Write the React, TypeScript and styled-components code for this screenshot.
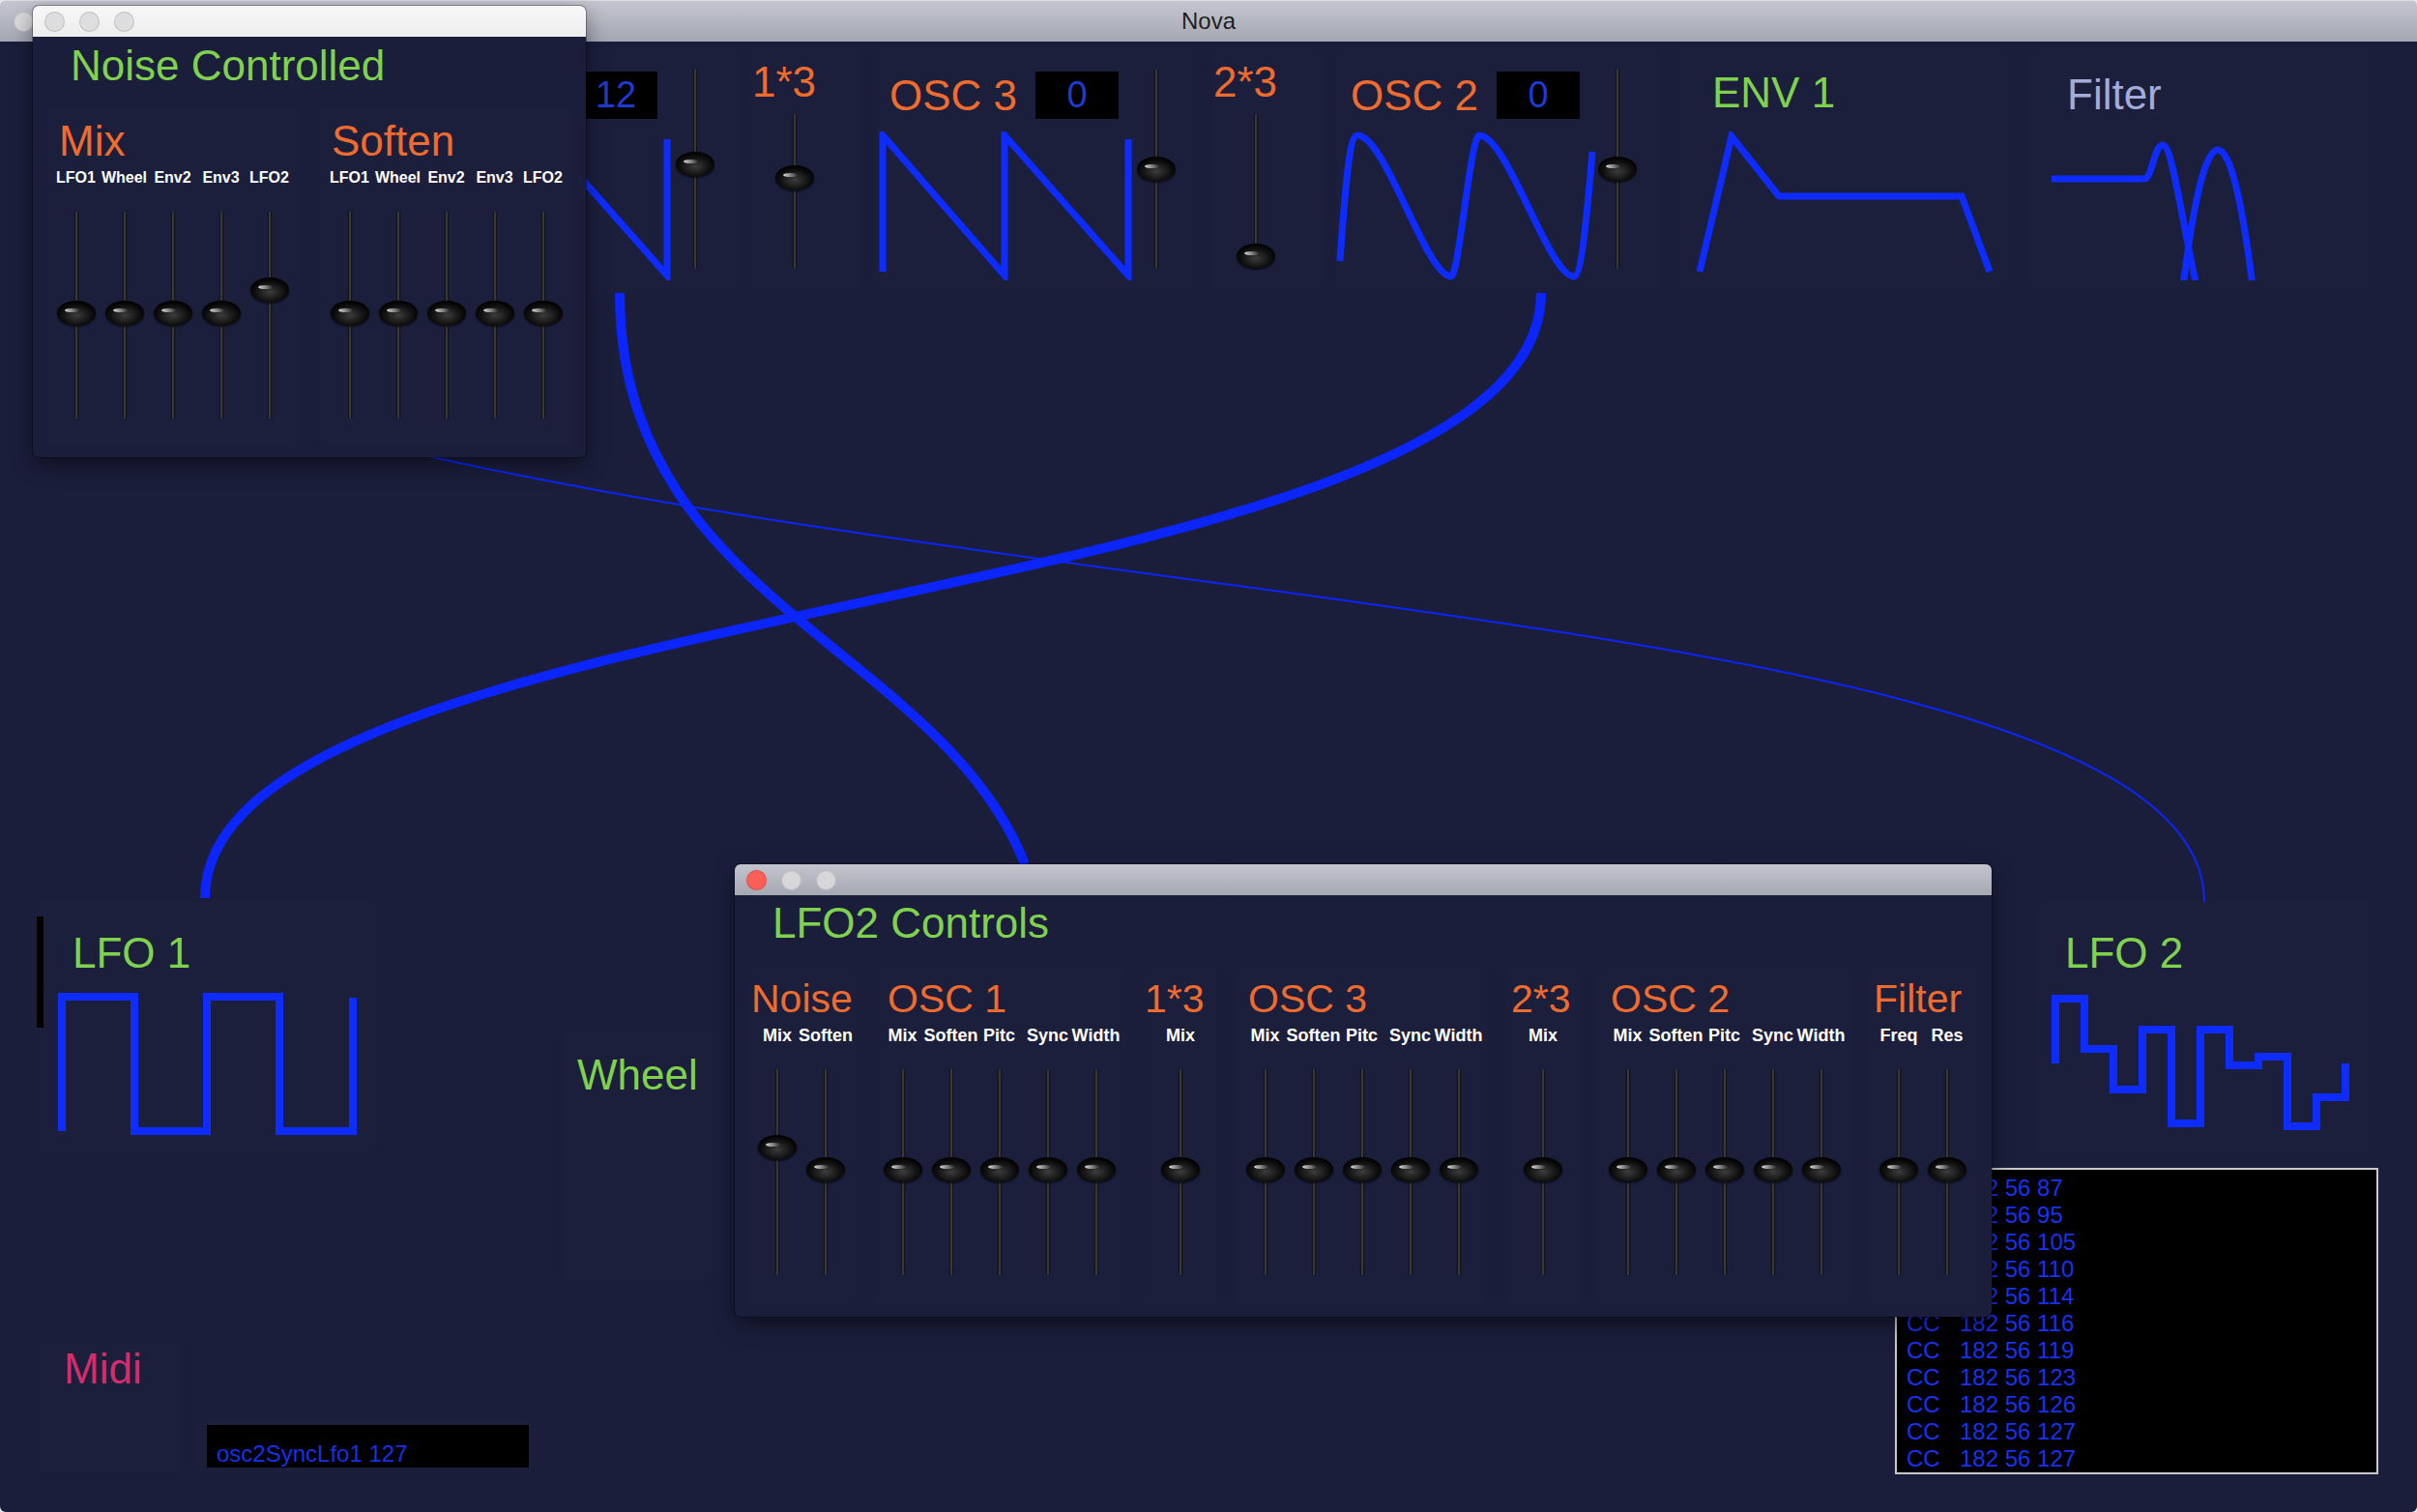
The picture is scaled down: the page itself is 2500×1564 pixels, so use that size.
import React, { FunctionComponent } from 'react';
import styled, { createGlobalStyle } from 'styled-components';

const NAVY = '#1a1e3b';
const PANEL = 'rgba(255, 255, 255, 0.008)';
const ORANGE = '#f06b2e';
const GREEN = '#80d24e';
const WAVE = '#0e2cff';
const CABLE = '#0b25fb';

const GlobalStyle = createGlobalStyle`
  html, body {
    margin: 0;
    padding: 0;
    background: #e9e9ec;
  }

  body {
    font-family: 'Liberation Sans', Arial, Helvetica, sans-serif;
    -webkit-font-smoothing: antialiased;
  }
`;

const Screen = styled.div`
  position: relative;
  width: 2500px;
  height: 1564px;
  overflow: hidden;
  background: #e9e9ec;
`;

const MainWindow = styled.div`
  display: flex;
  flex-direction: column;
  width: 100%;
  height: 100%;
  border-radius: 6px;
  overflow: hidden;
`;

const TitleBar = styled.div`
  display: grid;
  grid-template-columns: 1fr auto 1fr;
  align-items: center;
  height: 43px;
  flex-shrink: 0;
  padding: 0 14px;
  box-sizing: border-box;
  border-top: 1px solid #dcdde3;
  background: linear-gradient(#c5c6d0, #a4a6b3);
  font-size: 24px;
  color: #1f1f1f;
`;

const Lights = styled.div`
  display: flex;
  gap: 15px;
`;

const Light = styled.span<{ $color: string }>`
  display: block;
  width: 21px;
  height: 21px;
  border-radius: 50%;
  background: ${({ $color }) => $color};
  box-shadow: inset 0 0 0 1px rgba(0, 0, 0, 0.13);
`;

const Canvas = styled.div`
  position: relative;
  flex: 1;
  background: ${NAVY};
`;

// nodes on the patch canvas keep their own coordinates
const Node = styled.div<{ $x: number; $y: number }>`
  position: absolute;
  left: ${({ $x }) => $x}px;
  top: ${({ $y }) => $y}px;
`;

const Rack = styled.div`
  display: flex;
  gap: 14px;
`;

const Module = styled.div<{ $w: number; $h: number }>`
  position: relative;
  width: ${({ $w }) => $w}px;
  height: ${({ $h }) => $h}px;
  flex-shrink: 0;
  box-sizing: border-box;
  background: ${PANEL};
  border-radius: 5px;
`;

const OscModule = styled(Module)`
  display: flex;
`;

const OscMain = styled.div`
  display: flex;
  flex-direction: column;
  width: 270px;
  padding-top: 23px;
`;

const OscHeader = styled.div`
  display: flex;
  align-items: flex-start;
  width: 253px;
  height: 49px;
  padding-left: 16px;
  box-sizing: border-box;
`;

const ValueBox = styled.div`
  margin-left: auto;
  width: 86px;
  height: 49px;
  background: #000;
  color: #1e3ad0;
  font-size: 38px;
  line-height: 49px;
  text-align: center;
`;

const Title = styled.div<{ $color: string; $size?: number; $inset?: number; $top?: number }>`
  padding-left: ${({ $inset }) => $inset ?? 0}px;
  margin-top: ${({ $top }) => $top ?? 0}px;
  font-size: ${({ $size }) => $size ?? 44}px;
  line-height: 44px;
  color: ${({ $color }) => $color};
  white-space: nowrap;
`;

const Wave = styled.svg<{ $top: number; $left?: number }>`
  display: block;
  margin-top: ${({ $top }) => $top}px;
  margin-left: ${({ $left }) => $left ?? 0}px;
`;

const FaderSlot = styled.div<{ $top: number; $left?: number }>`
  padding-top: ${({ $top }) => $top}px;
  margin-left: ${({ $left }) => $left ?? 0}px;
  width: 44px;
`;

const WaveModule = styled(Module)<{ $padTop: number; $padLeft: number }>`
  padding-top: ${({ $padTop }) => $padTop}px;
  padding-left: ${({ $padLeft }) => $padLeft}px;
`;

const FaderBody = styled.div<{ $length: number }>`
  position: relative;
  display: flex;
  justify-content: center;
  width: 100%;
  height: ${({ $length }) => $length}px;
`;

const Track = styled.div`
  width: 4px;
  height: 100%;
  border-radius: 2px 2px 3px 3px;
  background: linear-gradient(90deg, #030303, #4a4a4a 50%, #030303);
  box-shadow: 0 0 1px rgba(0, 0, 0, 0.8);
`;

const Knob = styled.div<{ $pos: number }>`
  position: absolute;
  left: 50%;
  top: ${({ $pos }) => $pos * 100}%;
  width: 40px;
  height: 26px;
  transform: translate(-50%, -50%);
  border-radius: 50%;
  background: radial-gradient(ellipse 65% 65% at 50% 58%, #3c3c3c, #121212 55%, #000 85%);
  box-shadow: 0 1px 2px rgba(0, 0, 0, 0.7);

  &::after {
    content: '';
    position: absolute;
    left: 8px;
    top: 8px;
    width: 15px;
    height: 4px;
    border-radius: 50%;
    background: linear-gradient(90deg, rgba(255, 255, 255, 0.85), rgba(255, 255, 255, 0.05));
  }
`;

const Marker = styled.div`
  position: absolute;
  left: -1px;
  top: 16px;
  width: 7px;
  height: 115px;
  background: #000;
`;

const LogBox = styled.div`
  display: flex;
  align-items: flex-end;
  width: 333px;
  height: 44px;
  padding: 0 0 2px 10px;
  box-sizing: border-box;
  background: #000;
  color: #1432ea;
  font-size: 24px;
  line-height: 24px;
`;

const Monitor = styled.div`
  display: flex;
  flex-direction: column;
  justify-content: flex-end;
  width: 500px;
  height: 317px;
  padding-left: 10px;
  box-sizing: border-box;
  overflow: hidden;
  background: #000;
  border: 2px solid #c9c9cc;
`;

const MonitorRow = styled.div`
  display: flex;
  flex-shrink: 0;
  height: 28px;
  font-size: 24px;
  line-height: 28px;
  color: #1633f2;
  white-space: nowrap;
`;

const MonitorCmd = styled.span`
  width: 55px;
`;

const Cables = styled.svg`
  position: absolute;
  left: 0;
  top: 0;
  z-index: 2;
  pointer-events: none;
`;

const FloatWindow = styled.div<{ $x: number; $y: number; $w: number; $h: number }>`
  position: absolute;
  left: ${({ $x }) => $x}px;
  top: ${({ $y }) => $y}px;
  z-index: 3;
  display: flex;
  flex-direction: column;
  width: ${({ $w }) => $w}px;
  height: ${({ $h }) => $h}px;
  border-radius: 6px;
  overflow: hidden;
  background: ${NAVY};
  box-shadow: 0 8px 22px rgba(0, 0, 0, 0.45), 0 0 0 1px rgba(0, 0, 0, 0.3);
`;

const WindowBar = styled.div<{ $active?: boolean }>`
  display: flex;
  align-items: center;
  gap: 15px;
  height: 32px;
  flex-shrink: 0;
  padding-left: 12px;
  background: ${({ $active }) =>
    $active ? 'linear-gradient(#f8f8f8, #ededed)' : 'linear-gradient(#c3c4ce, #a5a7b3)'};
`;

const WindowBody = styled.div<{ $pad: string }>`
  padding: ${({ $pad }) => $pad};
`;

const PanelRow = styled.div<{ $gap: number }>`
  display: flex;
  gap: ${({ $gap }) => $gap}px;
  margin-top: 23px;
`;

const ControlPanel = styled.div<{ $w: number; $h: number }>`
  width: ${({ $w }) => $w}px;
  height: ${({ $h }) => $h}px;
  flex-shrink: 0;
  padding-top: 11px;
  box-sizing: border-box;
  background: ${PANEL};
  border-radius: 6px;
`;

const Columns = styled.div`
  display: flex;
  justify-content: center;
  margin-top: 7px;
`;

const Column = styled.div`
  display: flex;
  flex-direction: column;
  align-items: center;
  width: 50px;
`;

const ColumnLabel = styled.div<{ $size: number }>`
  height: 18px;
  font-size: ${({ $size }) => $size}px;
  line-height: 18px;
  font-weight: 700;
  color: #fff;
  white-space: nowrap;
  margin-bottom: 26px;
`;

interface FaderProps {
  length: number;
  value: number;
}

const Fader: FunctionComponent<FaderProps> = ({ length, value }) => (
  <FaderBody $length={length}>
    <Track />
    <Knob $pos={value} />
  </FaderBody>
);

interface FaderSpec {
  label: string;
  value: number;
}

interface PanelSpec {
  title: string;
  width: number;
  inset: number;
  faders: FaderSpec[];
}

interface PanelProps extends PanelSpec {
  height: number;
  titleSize: number;
  labelSize: number;
  track: number;
}

const Panel: FunctionComponent<PanelProps> = ({
  title,
  width,
  inset,
  faders,
  height,
  titleSize,
  labelSize,
  track,
}) => (
  <ControlPanel $w={width} $h={height}>
    <Title $color={ORANGE} $size={titleSize} $inset={inset}>
      {title}
    </Title>
    <Columns>
      {faders.map((fader, index) => (
        <Column key={`${title}-${index}`}>
          <ColumnLabel $size={labelSize}>{fader.label}</ColumnLabel>
          <Fader length={track} value={fader.value} />
        </Column>
      ))}
    </Columns>
  </ControlPanel>
);

const oscFaders = (value: number): FaderSpec[] =>
  ['Mix', 'Soften', 'Pitc', 'Sync', 'Width'].map(label => ({ label, value }));

const modFaders = (lfo2: number): FaderSpec[] => [
  { label: 'LFO1', value: 0.49 },
  { label: 'Wheel', value: 0.49 },
  { label: 'Env2', value: 0.49 },
  { label: 'Env3', value: 0.49 },
  { label: 'LFO2', value: lfo2 },
];

const noisePanels: PanelSpec[] = [
  { title: 'Mix', width: 263, inset: 14, faders: modFaders(0.38) },
  { title: 'Soften', width: 263, inset: 13, faders: modFaders(0.49) },
];

const lfo2Panels: PanelSpec[] = [
  {
    title: 'Noise',
    width: 110,
    inset: 3,
    faders: [
      { label: 'Mix', value: 0.38 },
      { label: 'Soften', value: 0.49 },
    ],
  },
  { title: 'OSC 1', width: 261, inset: 15, faders: oscFaders(0.49) },
  { title: '1*3', width: 76, inset: 1, faders: [{ label: 'Mix', value: 0.49 }] },
  { title: 'OSC 3', width: 261, inset: 13, faders: oscFaders(0.49) },
  { title: '2*3', width: 76, inset: 5, faders: [{ label: 'Mix', value: 0.49 }] },
  { title: 'OSC 2', width: 261, inset: 13, faders: oscFaders(0.49) },
  {
    title: 'Filter',
    width: 112,
    inset: 5,
    faders: [
      { label: 'Freq', value: 0.49 },
      { label: 'Res', value: 0.49 },
    ],
  },
];

const SAW = 'M9,145 L9,4 L135,149 L135,4 L263,149 L263,8';
const SOFT_SAW =
  'M5,134 C11,50 15,4 23,4 C52,4 94,150 120,150 C128,150 140,4 149,4 C178,4 221,150 247,150 C255,150 261,80 266,21';

interface OscProps {
  title: string;
  value: string;
  wave: string;
  fader: number;
}

const Osc: FunctionComponent<OscProps> = ({ title, value, wave, fader }) => (
  <OscModule $w={335} $h={252}>
    <OscMain>
      <OscHeader>
        <Title $color={ORANGE} $top={3}>
          {title}
        </Title>
        <ValueBox>{value}</ValueBox>
      </OscHeader>
      <Wave $top={13} width={270} height={154}>
        <path d={wave} fill="none" stroke={WAVE} strokeWidth={7} />
      </Wave>
    </OscMain>
    <FaderSlot $top={21}>
      <Fader length={206} value={fader} />
    </FaderSlot>
  </OscModule>
);

interface MultProps {
  title: string;
  fader: number;
}

const Mult: FunctionComponent<MultProps> = ({ title, fader }) => (
  <WaveModule $w={114} $h={252} $padTop={12} $padLeft={2}>
    <Title $color={ORANGE}>{title}</Title>
    <FaderSlot $top={11} $left={22}>
      <Fader length={160} value={fader} />
    </FaderSlot>
  </WaveModule>
);

const monitorRows = ['80', '87', '95', '105', '110', '114', '116', '119', '123', '126', '127', '127'];

const TrafficLights: FunctionComponent<{ first?: string; rest?: string }> = ({
  first = '#dedee0',
  rest = '#dedee0',
}) => (
  <Lights>
    <Light $color={first} />
    <Light $color={rest} />
    <Light $color={rest} />
  </Lights>
);

const App: FunctionComponent = () => (
  <>
    <GlobalStyle />
    <Screen>
      <MainWindow>
        <TitleBar>
          <TrafficLights first="#d9d9dc" rest="#d9d9dc" />
          <span>Nova</span>
          <span />
        </TitleBar>
        <Canvas>
          <Node $x={427} $y={8}>
            <Rack>
              <Osc title="OSC 1" value="12" wave={SAW} fader={0.476} />
              <Mult title="1*3" fader={0.41} />
              <Osc title="OSC 3" value="0" wave={SAW} fader={0.5} />
              <Mult title="2*3" fader={0.92} />
              <Osc title="OSC 2" value="0" wave={SOFT_SAW} fader={0.5} />
              <WaveModule $w={347} $h={252} $padTop={23} $padLeft={0}>
                <Title $color={GREEN} $inset={41}>
                  ENV 1
                </Title>
                <Wave $top={18} width={347} height={154}>
                  <path
                    d="M28,145 L61,5 L110,67 L299,67 L328,145"
                    fill="none"
                    stroke={WAVE}
                    strokeWidth={7}
                  />
                </Wave>
              </WaveModule>
              <WaveModule $w={357} $h={252} $padTop={25} $padLeft={0} style={{ marginLeft: 9 }}>
                <Title $color="#a4abd8" $inset={38}>
                  Filter
                </Title>
                <Wave $top={16} width={357} height={154}>
                  <path
                    d="M22,49 L118,49 C126,49 128,14 137,14 C147,14 158,100 172,160"
                    fill="none"
                    stroke={WAVE}
                    strokeWidth={7}
                  />
                  <path
                    d="M158,160 C168,80 180,19 194,19 C208,19 220,80 230,160"
                    fill="none"
                    stroke={WAVE}
                    strokeWidth={7}
                  />
                </Wave>
              </WaveModule>
            </Rack>
          </Node>

          <Node $x={39} $y={889}>
            <WaveModule $w={349} $h={260} $padTop={32} $padLeft={0}>
              <Marker />
              <Title $color={GREEN} $inset={36}>
                LFO 1
              </Title>
              <Wave $top={17} $left={11} width={330} height={152}>
                <path
                  d="M14,145 L14,6 L89,6 L89,145 L164,145 L164,6 L239,6 L239,145 L315,145 L315,7"
                  fill="none"
                  stroke={WAVE}
                  strokeWidth={8}
                />
              </Wave>
            </WaveModule>
          </Node>

          <Node $x={582} $y={1022}>
            <WaveModule $w={164} $h={259} $padTop={25} $padLeft={15}>
              <Title $color={GREEN}>Wheel</Title>
            </WaveModule>
          </Node>

          <Node $x={39} $y={1340}>
            <WaveModule $w={148} $h={140} $padTop={11} $padLeft={27}>
              <Title $color="#d42d6c">Midi</Title>
            </WaveModule>
          </Node>

          <Node $x={206} $y={1425}>
            <WaveModule $w={344} $h={55} $padTop={6} $padLeft={8}>
              <LogBox>osc2SyncLfo1 127</LogBox>
            </WaveModule>
          </Node>

          <Node $x={2106} $y={890}>
            <WaveModule $w={351} $h={259} $padTop={31} $padLeft={0}>
              <Title $color={GREEN} $inset={30}>
                LFO 2
              </Title>
              <Wave $top={17} $left={10} width={330} height={152}>
                <path
                  d="M10,75 L10,8 L40,8 L40,60 L70,60 L70,102 L100,102 L100,40 L130,40 L130,137 L160,137 L160,40 L190,40 L190,77 L220,77 L220,68 L250,68 L250,140 L280,140 L280,110 L310,110 L310,75"
                  fill="none"
                  stroke={WAVE}
                  strokeWidth={8}
                />
              </Wave>
            </WaveModule>
          </Node>

          <Node $x={1960} $y={1165}>
            <Monitor>
              {monitorRows.map((row, index) => (
                <MonitorRow key={`midi-row-${index}`}>
                  <MonitorCmd>CC</MonitorCmd>
                  <span>182 56 {row}</span>
                </MonitorRow>
              ))}
            </Monitor>
          </Node>
        </Canvas>
      </MainWindow>

      <Cables width={2500} height={1564}>
        <path d="M641,303 C641,622 973,670 1060,894" fill="none" stroke={CABLE} strokeWidth={10} />
        <path d="M1594,303 C1594,638 212,606 212,929" fill="none" stroke={CABLE} strokeWidth={10} />
        <path d="M370,455 C1110,636 2280,640 2280,933" fill="none" stroke={CABLE} strokeWidth={2} />
      </Cables>

      <FloatWindow $x={34} $y={6} $w={572} $h={467}>
        <WindowBar $active>
          <TrafficLights />
        </WindowBar>
        <WindowBody $pad="8px 13px 0">
          <Title $color={GREEN} $inset={26}>
            Noise Controlled
          </Title>
          <PanelRow $gap={20}>
            {noisePanels.map(panel => (
              <Panel
                key={panel.title}
                {...panel}
                height={349}
                titleSize={44}
                labelSize={16}
                track={214}
              />
            ))}
          </PanelRow>
        </WindowBody>
      </FloatWindow>

      <FloatWindow $x={760} $y={894} $w={1300} $h={468}>
        <WindowBar>
          <TrafficLights first="#fc5f58" rest="#d7d7da" />
        </WindowBar>
        <WindowBody $pad="7px 14px 0">
          <Title $color={GREEN} $inset={25}>
            LFO2 Controls
          </Title>
          <PanelRow $gap={19}>
            {lfo2Panels.map(panel => (
              <Panel
                key={panel.title}
                {...panel}
                height={350}
                titleSize={41}
                labelSize={18}
                track={213}
              />
            ))}
          </PanelRow>
        </WindowBody>
      </FloatWindow>
    </Screen>
  </>
);

export default App;
